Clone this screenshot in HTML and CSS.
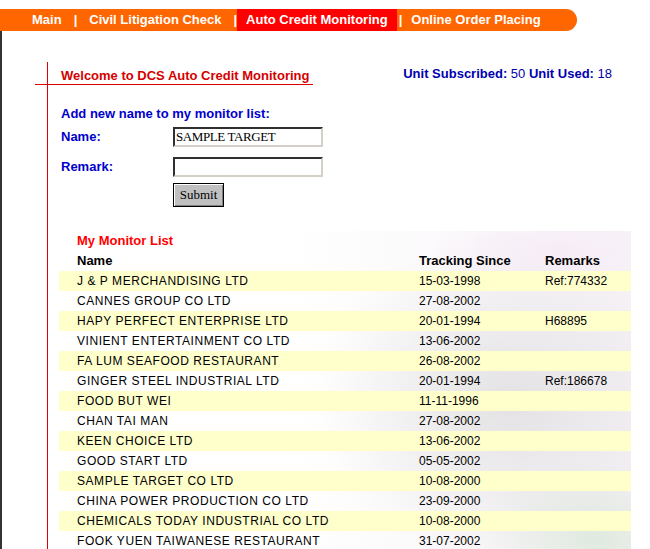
FILE: index.html
```html
<!DOCTYPE html>
<html>
<head>
<meta charset="utf-8">
<title>DCS Auto Credit Monitoring</title>
<link rel="stylesheet" href="styles.css">
</head>
<body>
<div class="nav">
  <a class="nav-item first">Main</a><span class="sep">|</span><a class="nav-item">Civil Litigation Check</a><span class="sep">|</span><a class="nav-item active">Auto Credit Monitoring</a><span class="sep">|</span><a class="nav-item last">Online Order Placing</a>
</div>
<div class="page">
  <div class="content">
    <div class="welcome-row">
      <div class="welcome">Welcome to DCS Auto Credit Monitoring</div>
      <div class="units"><b>Unit Subscribed:</b> 50 <b>Unit Used:</b> 18</div>
    </div>
    <form class="add-form">
      <div class="form-title">Add new name to my monitor list:</div>
      <div class="field"><label>Name:</label><input class="text-input" type="text" value="SAMPLE TARGET"></div>
      <div class="field"><label>Remark:</label><input class="text-input" type="text" value=""></div>
      <div class="actions"><button class="submit" type="button">Submit</button></div>
    </form>
    <div class="list">
      <div class="list-title">My Monitor List</div>
      <div class="row head"><span>Name</span><span>Tracking Since</span><span>Remarks</span></div>
      <div class="row alt"><span class="name">J &amp; P MERCHANDISING LTD</span><span>15-03-1998</span><span>Ref:774332</span></div>
      <div class="row"><span class="name">CANNES GROUP CO LTD</span><span>27-08-2002</span><span></span></div>
      <div class="row alt"><span class="name">HAPY PERFECT ENTERPRISE LTD</span><span>20-01-1994</span><span>H68895</span></div>
      <div class="row"><span class="name">VINIENT ENTERTAINMENT CO LTD</span><span>13-06-2002</span><span></span></div>
      <div class="row alt"><span class="name">FA LUM SEAFOOD RESTAURANT</span><span>26-08-2002</span><span></span></div>
      <div class="row"><span class="name">GINGER STEEL INDUSTRIAL LTD</span><span>20-01-1994</span><span>Ref:186678</span></div>
      <div class="row alt"><span class="name">FOOD BUT WEI</span><span>11-11-1996</span><span></span></div>
      <div class="row"><span class="name">CHAN TAI MAN</span><span>27-08-2002</span><span></span></div>
      <div class="row alt"><span class="name">KEEN CHOICE LTD</span><span>13-06-2002</span><span></span></div>
      <div class="row"><span class="name">GOOD START LTD</span><span>05-05-2002</span><span></span></div>
      <div class="row alt"><span class="name">SAMPLE TARGET CO LTD</span><span>10-08-2000</span><span></span></div>
      <div class="row"><span class="name">CHINA POWER PRODUCTION CO LTD</span><span>23-09-2000</span><span></span></div>
      <div class="row alt"><span class="name">CHEMICALS TODAY INDUSTRIAL CO LTD</span><span>10-08-2000</span><span></span></div>
      <div class="row"><span class="name">FOOK YUEN TAIWANESE RESTAURANT</span><span>31-07-2002</span><span></span></div>
    </div>
  </div>
</div>
</body>
</html>
```
FILE: styles.css
```css
html {
  overflow: hidden;
}
body {
  margin: 0;
  background: #ffffff;
  font-family: "Liberation Sans", Arial, sans-serif;
  color: #000;
}

/* top navigation */
.nav {
  margin-top: 9px;
  width: 577px;
  height: 22px;
  box-sizing: border-box;
  padding-left: 22px;
  display: flex;
  background: #ff6600;
  border-radius: 0 11px 11px 0;
  color: #ffffff;
  font-size: 13px;
  font-weight: bold;
  line-height: 22px;
  white-space: nowrap;
}
.nav-item {
  padding: 0 10px;
}
.nav-item.active {
  background: #ff0000;
  padding: 0 9px;
  margin-left: -2px;
}
.nav-item.last {
  margin-left: -3px;
}
.sep {
  margin: 0 2px;
}

/* page frame */
.page {
  padding-top: 31px;
  border-left: 2px solid #333333;
}
.content {
  margin-left: 45px;
  border-left: 1px solid #e00000;
}

/* welcome header */
.welcome-row {
  display: flex;
  align-items: flex-start;
  height: 23px;
}
.welcome {
  margin: 6px 0 0 -13px;
  width: 278px;
  box-sizing: border-box;
  padding-left: 26px;
  line-height: 16px;
  border-bottom: 1px solid #e00000;
  color: #d40000;
  font-size: 13px;
  font-weight: bold;
  white-space: nowrap;
}
.units {
  margin: 4px 38px 0 auto;
  line-height: 16px;
  font-size: 13px;
  color: #0000b0;
  white-space: nowrap;
}

/* add form */
.add-form {
  margin: 21px 0 0 13px;
  color: #0000cc;
  font-size: 13px;
  font-weight: bold;
}
.form-title {
  line-height: 16px;
}
.field {
  display: flex;
  height: 20px;
  margin-top: 5px;
}
.field + .field {
  margin-top: 10px;
}
.field label {
  width: 112px;
  line-height: 20px;
}
.text-input {
  width: 150px;
  height: 20px;
  box-sizing: border-box;
  margin: 0;
  padding: 0 1px;
  border: 2px solid;
  border-color: #303030 #d4d0c8 #d4d0c8 #303030;
  background: #ffffff;
  font-family: "Liberation Serif", "Times New Roman", serif;
  font-size: 13px;
  letter-spacing: -0.4px;
  color: #000;
  outline: none;
}
.actions {
  padding-left: 112px;
  margin-top: 6px;
  height: 24px;
}
.submit {
  width: 51px;
  height: 24px;
  margin: 0;
  padding: 0;
  background: #c0c0c0;
  border: 1px solid #000;
  box-shadow: inset 1px 1px 0 #ffffff, inset -1px -1px 0 #808080;
  font-family: "Liberation Serif", "Times New Roman", serif;
  font-size: 13px;
  color: #000;
}

/* monitor list */
.list {
  margin: 24px 0 0 11px;
  width: 572px;
  background:
    radial-gradient(ellipse 130px 50px at 500px 20px, rgba(246, 232, 246, 0.7), rgba(246, 232, 246, 0)),
    radial-gradient(ellipse 190px 170px at 450px 170px, rgba(200, 200, 200, 0.45), rgba(200, 200, 200, 0)),
    radial-gradient(ellipse 120px 80px at 540px 310px, rgba(200, 225, 200, 0.5), rgba(200, 225, 200, 0)),
    linear-gradient(to right, rgba(255, 255, 255, 0) 40%, rgba(240, 232, 240, 0.5) 100%);
}
.list-title {
  padding-left: 18px;
  line-height: 20px;
  color: #ff0000;
  font-size: 13px;
  font-weight: bold;
}
.row {
  display: grid;
  grid-template-columns: 342px 126px 1fr;
  padding-left: 18px;
  height: 20px;
  line-height: 20px;
  font-size: 12px;
  white-space: nowrap;
}
.row .name {
  letter-spacing: 0.55px;
}
.row.head {
  font-size: 13px;
  font-weight: bold;
}
.row.alt {
  background: #ffffcc;
}
```
